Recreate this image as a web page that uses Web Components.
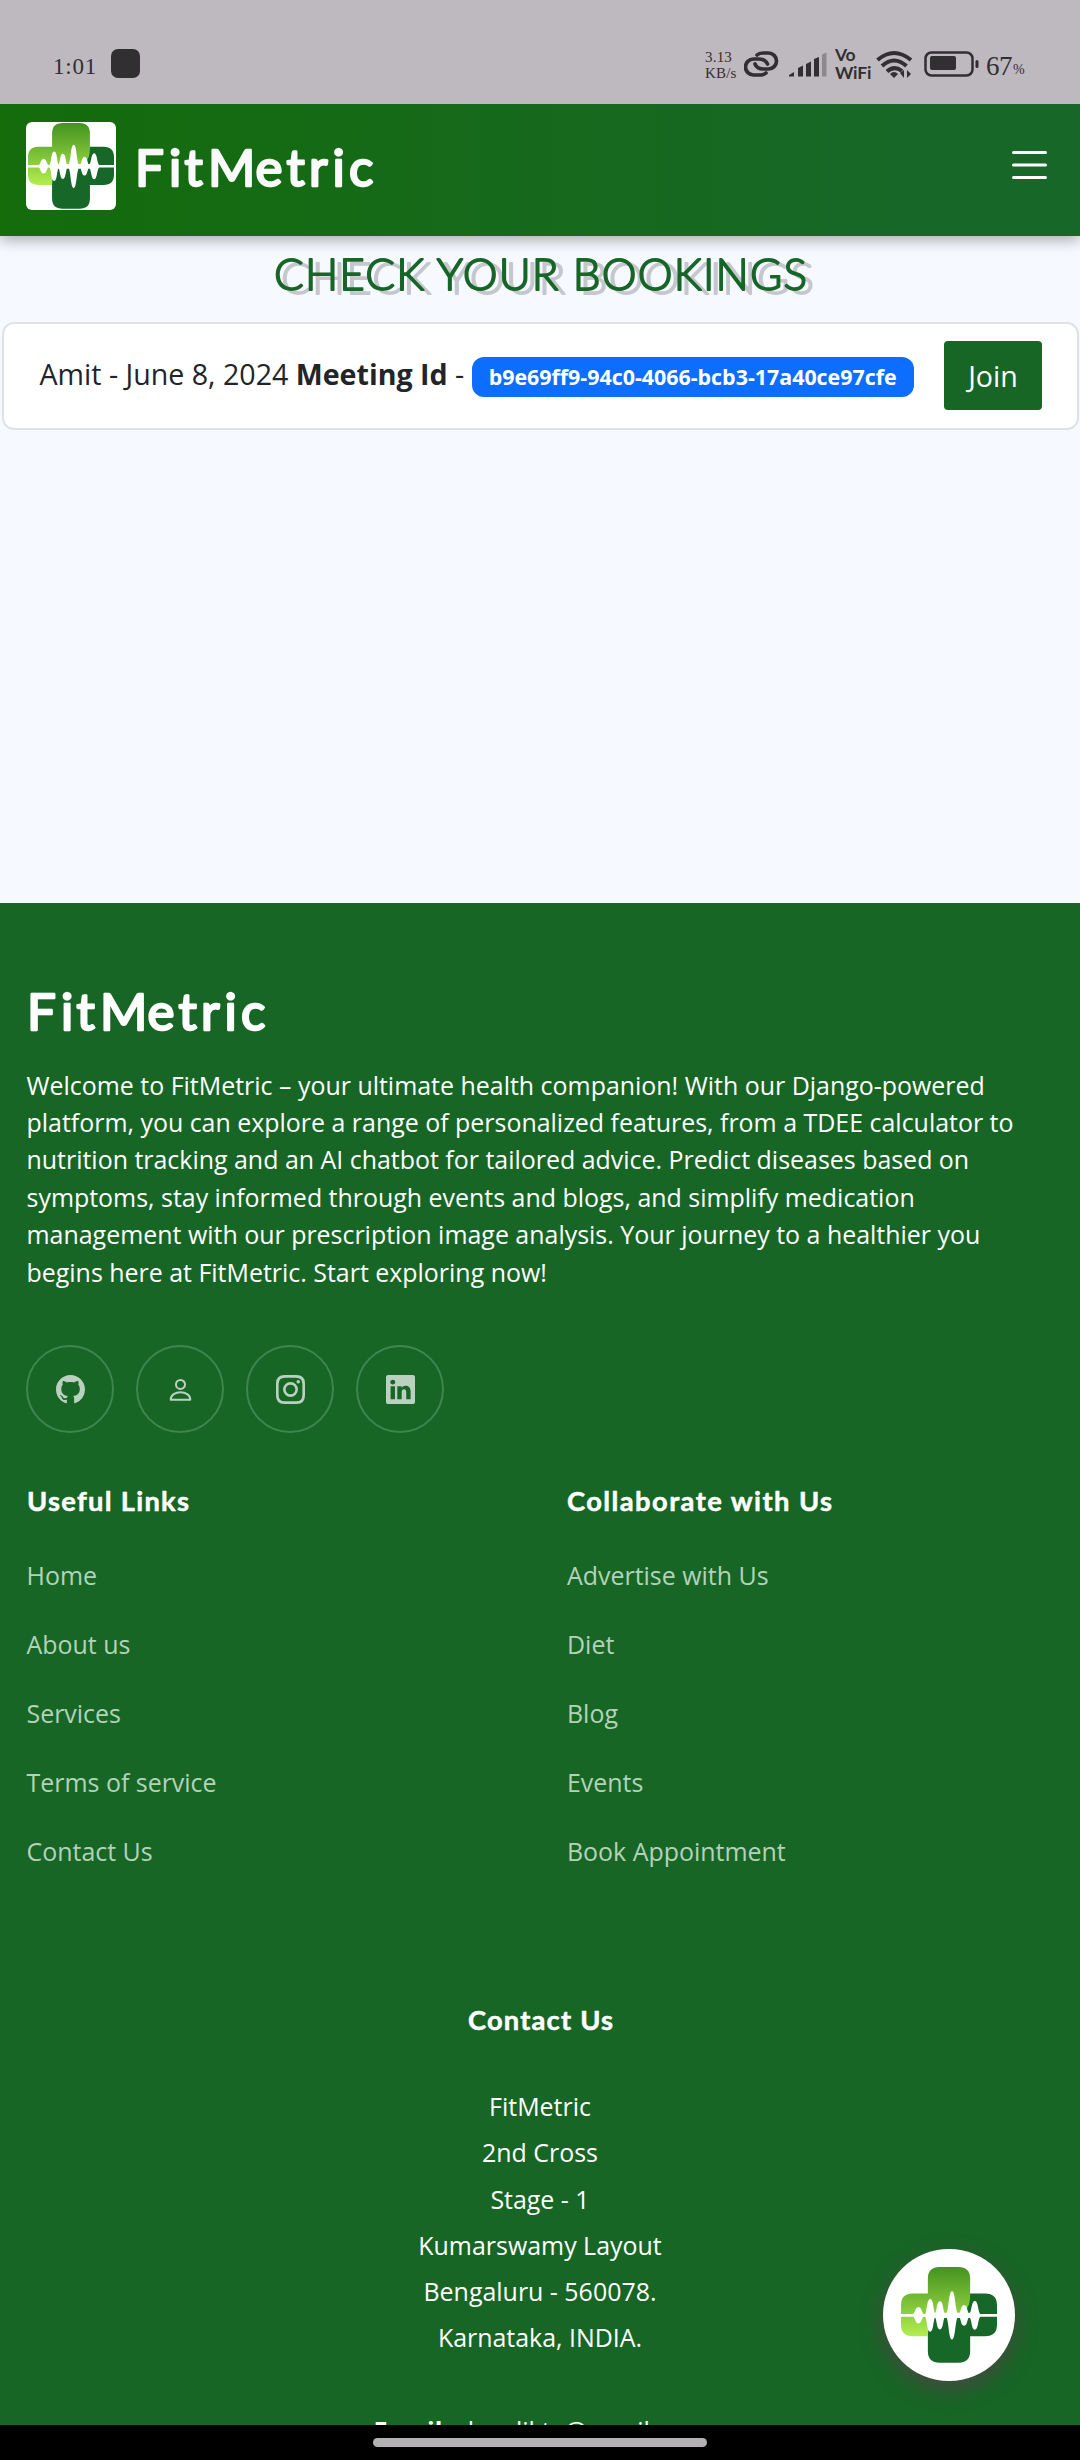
<!DOCTYPE html>
<html lang="en">
<head>
<meta charset="utf-8">
<title>FitMetric</title>
<style>
html,body{margin:0;height:2460px;overflow:hidden}
body{font-family:"Open Sans",sans-serif;background:#f6f9ff}
</style>
</head>
<body>
<fit-app></fit-app>
<script>
const define=(name,html)=>customElements.define(name,class extends HTMLElement{
  connectedCallback(){
    if(this.shadowRoot)return;
    const t=document.createElement('template');
    t.innerHTML=typeof html==='function'?html(this):html;
    this.attachShadow({mode:'open'}).append(t.content.cloneNode(true));
  }
});

// Rounded lettering: light strokes thickened with round joins.
define('round-text',el=>{
  const a=n=>el.getAttribute(n);
  const len=a('len')?`textLength="${a('len')}" lengthAdjust="spacing"`:'';
  return `<style>:host{display:block;width:${a('w')}px;height:${a('h')}px}svg{display:block;overflow:visible}
  text{font:${a('weight')||400} ${a('size')}px Lato,sans-serif;fill:currentColor;stroke:currentColor;stroke-width:${a('stroke')}px;stroke-linejoin:round}</style>
  <svg width="${a('w')}" height="${a('h')}"><text x="${a('x')||0}" y="${a('base')}" ${len}>${a('text')}</text></svg>`;
});

const spike=(x,h,w)=>`M${x-w},144C${x-8},141 ${x-12},${144-h} ${x},${144-h}S${x+8},141 ${x+w},144C${x+8},147 ${x+12},${144+h} ${x},${144+h}S${x-8},147 ${x-w},144Z`;
define('cross-logo',`<style>:host{display:block}svg{display:block;width:100%;height:100%}</style>
<svg viewBox="0 0 286 286"><defs><linearGradient id="g" x1="0" y1="0" x2="0" y2="206" gradientUnits="userSpaceOnUse"><stop stop-color="#449220"/><stop offset="1" stop-color="#b2ee4e"/></linearGradient></defs>
<path fill="#176728" d="M80 144H180L206 79H251Q286 79 286 114V171Q286 206 251 206H206V250Q206 285 171 285H115Q80 285 80 250Z"/>
<path fill="url(#g)" d="M80 35Q80 0 115 0H171Q206 0 206 35V86Q206 118 190 130L170 146H100Q80 160 80 206H35Q0 206 0 171V114Q0 79 35 79H80Z"/>
<path stroke="#fff" stroke-width="8" d="M-2 144H288"/>
<path fill="#fff" d="${spike(52,24,22)}${spike(87,49,19)}${spike(116,42,19)}${spike(152,72,22)}${spike(188,31,20)}${spike(220,43,21)}M75 136H230V152H75Z"/></svg>`);

define('status-bar',`<style>
:host{display:flex;height:104px;background:#beb9bf;color:#322f32;font-family:"Liberation Serif",serif;box-sizing:border-box;padding:0 57px 0 53px;justify-content:space-between;z-index:3}
.l{display:flex;gap:14px;padding-top:49px}.l span{font-size:23px;line-height:35px;width:44px;letter-spacing:.8px}
.l i{width:29px;height:29px;border-radius:7px;background:#322f32}
.r{display:grid;grid-template-columns:39px 45px 46px 41px 48px 62px 27px 10px;padding-top:46px;height:40px}
.n{font-size:15px;line-height:16px;padding-top:3px;letter-spacing:.2px}
.v{font:700 17.500px/17px Lato,sans-serif;letter-spacing:-.2px}
.v span+span{margin-top:1px}
.b{font-size:27px;line-height:40px;letter-spacing:-.5px}.p{font-size:14px;line-height:47px;letter-spacing:-1px}
svg{display:block}.v span,.n span{display:block}
</style>
<div class="l"><span>1:01</span><i></i></div>
<div class="r"><div class="n"><span>3.13</span><span>KB/s</span></div>
<svg width="36" height="34" fill="none" stroke="#322f32" stroke-width="3.700" stroke-linecap="round"><path d="M13 9Q15 7 19 7H24.500a8 8 0 0 1 0 16H19Q13 23 11 18"/><path d="M22 27Q20 29 16 29H9.500a8 8 0 0 1 0-16H15Q21 13 23.500 18"/></svg>
<svg width="40" height="34" fill="#322f32"><path d="M0 30.500V29l5-3v4q0 .5-.5.5zM9 30.500V22l5-2.500v11zM17 30.500V18l5-2.500v15zM25 30.500V13l5-2v19.500z"/><path fill="#8c888d" d="M33 30.500V8.500l4.500-2v24z"/></svg>
<div class="v"><span>Vo</span><span>WiFi</span></div>
<svg width="38" height="34"><g fill="none" stroke="#322f32" stroke-width="4"><path d="M1.500 14Q18 0 35 14"/><path d="M6 20Q18 9 30.500 20"/><path d="M11 25.500Q18 19 26 25"/></g><path fill="#322f32" d="M14 28q4-4 8 0l-4 4z"/><path fill="#322f32" d="M28 24v8l-4-5zM31 32v-8l4 4z"/></svg>
<svg width="58" height="34"><rect x="1.500" y="6.500" width="47" height="23" rx="6" fill="none" stroke="#322f32" stroke-width="2.500"/><rect x="6" y="10" width="26" height="14" rx="2" fill="#322f32"/><rect x="51.500" y="14" width="3" height="8" rx="1.500" fill="#322f32"/></svg>
<div class="b">67</div><div class="p">%</div></div>`);

define('site-header',`<style>
:host{display:flex;align-items:flex-start;height:132px;box-sizing:border-box;padding:18px 33px 0 26px;background:linear-gradient(90deg,#146c0b,#176728 85%);box-shadow:0 4px 14px rgba(0,0,0,.32);z-index:2;color:#fafafa}
.logo{width:90px;height:88px;border-radius:6px;background:#fff;display:grid;place-items:center}
cross-logo{width:86px;height:86px}
round-text{margin-left:21.500px;flex:1}
svg{margin-top:28px}
</style><div class="logo"><cross-logo></cross-logo></div>
<round-text text="FitMetric" x="-3 31 46.500 70 117.500 148.500 171 194.500 211" base="64" size="51" stroke="2.400" w="260" h="88"></round-text>
<svg width="35" height="30" stroke="#fff" stroke-width="3" stroke-linecap="round"><path d="M1.500 2.500h32M1.500 15h32M1.500 27.500h32"/></svg>`);

define('booking-card',`<style>
:host{display:flex;align-items:flex-start;margin:0 1px 0 2px;height:108px;box-sizing:border-box;border:2px solid #dee2e6;border-radius:12px;background:#fff;color:#212529;font-size:28.600px}
.t{margin:27px 0 0 35.500px;line-height:46px;flex:1;white-space:nowrap;display:flex}
.t span,.t b{white-space:pre}
mark{display:block;margin-top:6px;width:442px;height:40px;box-sizing:border-box;border-radius:12px;background:#0d6efd;color:#fff;font-weight:700;font-size:21.400px;line-height:39.500px;text-align:center}
button{all:unset;width:98px;height:69px;margin:17px 35px 0 0;border-radius:4px;background:#186626;color:#fff;text-align:center;line-height:65px}
button span{display:block;height:65px;margin-top:-1px}
</style><div class="t"><span><slot name="who"></slot> </span><b>Meeting Id</b><span> - </span><mark><slot name="id"></slot></mark></div><button><span>Join</span></button>`);

define('bookings-page',`<style>
:host{display:flex;flex-direction:column;height:667px;background:#f6f9ff}
round-text{color:#176628;margin:0 0 16px 274px;filter:drop-shadow(7px 4px 0 #c5c7cc)}
</style><round-text text="CHECK YOUR BOOKINGS" base="53.500" size="44" weight="300" stroke="1.800" len="533" w="540" h="70"></round-text>
<booking-card><span slot="who">Amit - June 8, 2024</span><span slot="id">b9e69ff9-94c0-4066-bcb3-17a40ce97cfe</span></booking-card>`);

define('social-link',`<style>:host{display:grid;place-items:center;box-sizing:border-box;width:88px;height:88px;border:2px solid #3f8550;border-radius:50%}</style><slot></slot>`);

define('link-list',el=>`<style>
:host{display:block;flex:1}
round-text{color:#fff;margin-bottom:37.300px}
a{display:block;font-size:24.950px;line-height:38px;margin-bottom:31px;color:#b3d3b9;white-space:nowrap}
</style><round-text text="${el.getAttribute('head')}" base="32" size="27.300" weight="700" stroke=".5" len="${el.getAttribute('len')}" w="400" h="40"></round-text>
${el.getAttribute('items').split('|').map(i=>`<a>${i}</a>`).join('')}`);

const icon=p=>`<social-link><svg style="display:block" width="29" height="29" viewBox="0 0 16 16" fill="#b9d1be">${p}</svg></social-link>`;
define('site-footer',`<style>
:host{display:flex;flex-direction:column;height:1522px;box-sizing:border-box;overflow:hidden;background:#186626;color:#fff;padding-top:78px}
:host>*{flex:none}
.brand{margin-left:29.500px}
p{margin:4.600px 0 0 26.500px;font-size:24.950px;line-height:37.400px;white-space:nowrap}
.soc{display:flex;gap:22px;margin:54px 0 0 26px}
.cols{display:flex;margin:46px 0 0 26.500px;height:520px}
link-list:first-child{flex:0 0 540.500px}
.contact{align-self:center;display:flex;flex-direction:column;align-items:center}
.contact round-text{margin:0 0 47px 1px}
.contact div{font-size:24.950px;line-height:46.250px;white-space:nowrap}
</style>
<round-text class="brand" text="FitMetric" x="-3 31 46.500 70 117.500 148.500 171 194.500 211" base="49" size="51" stroke="2.400" w="260" h="81"></round-text>
<p>Welcome to FitMetric – your ultimate health companion! With our Django-powered<br>platform, you can explore a range of personalized features, from a TDEE calculator to<br>nutrition tracking and an AI chatbot for tailored advice. Predict diseases based on<br>symptoms, stay informed through events and blogs, and simplify medication<br>management with our prescription image analysis. Your journey to a healthier you<br>begins here at FitMetric. Start exploring now!</p>
<div class="soc">
${icon('<path d="M8 0C3.580 0 0 3.580 0 8c0 3.540 2.290 6.530 5.470 7.590.4.070.55-.17.55-.38 0-.19-.01-.82-.01-1.490-2.010.37-2.530-.49-2.690-.94-.09-.23-.48-.94-.82-1.130-.28-.15-.68-.52-.01-.53.63-.01 1.080.58 1.230.82.72 1.210 1.870.87 2.330.66.070-.52.28-.87.51-1.070-1.780-.2-3.640-.89-3.640-3.950 0-.87.31-1.590.82-2.150-.08-.2-.36-1.020.08-2.120 0 0 .67-.21 2.200.82.64-.18 1.320-.27 2-.27s1.360.09 2 .27c1.530-1.040 2.200-.82 2.200-.82.44 1.100.16 1.920.08 2.120.51.56.82 1.270.82 2.150 0 3.070-1.870 3.750-3.650 3.950.29.25.54.73.54 1.480 0 1.070-.01 1.930-.01 2.200 0 .21.15.46.55.38A8.010 8.010 0 0 0 16 8c0-4.420-3.580-8-8-8"/>')}
${icon('<path fill="none" stroke="#b9d1be" stroke-width="1.100" stroke-linejoin="round" d="M8 2.700a2.500 2.500 0 1 1 0 5a2.500 2.500 0 1 1 0-5zM2.600 13.600C2.600 8.200 13.400 8.200 13.400 13.600z"/>')}
${icon('<path fill-rule="evenodd" d="M4.700 0H11.300Q16 0 16 4.700V11.300Q16 16 11.300 16H4.700Q0 16 0 11.300V4.700Q0 0 4.700 0zM5 1.450Q1.450 1.450 1.450 5V11Q1.450 14.550 5 14.550H11Q14.550 14.550 14.550 11V5Q14.550 1.450 11 1.450zM8 3.890a4.110 4.110 0 1 1 0 8.220a4.110 4.110 0 1 1 0-8.220zm0 1.440a2.670 2.670 0 1 0 0 5.340a2.670 2.670 0 1 0 0-5.340z"/><circle cx="12.270" cy="3.730" r=".96"/>')}
${icon('<path d="M0 1.146C0 .513.526 0 1.175 0h13.650C15.474 0 16 .513 16 1.146v13.708c0 .633-.526 1.146-1.175 1.146H1.175C.526 16 0 15.487 0 14.854zm4.943 12.248V6.169H2.542v7.225zm-1.200-8.212c.837 0 1.358-.554 1.358-1.248-.015-.709-.52-1.248-1.342-1.248S2.400 3.226 2.400 3.934c0 .694.521 1.248 1.327 1.248zm4.908 8.212V9.359c0-.216.016-.432.08-.586.173-.431.568-.878 1.232-.878.869 0 1.216.662 1.216 1.634v3.865h2.401V9.250c0-2.220-1.184-3.252-2.764-3.252-1.274 0-1.845.7-2.165 1.193v.025h-.016l.016-.025V6.169h-2.400c.03.678 0 7.225 0 7.225z"/>')}
</div>
<div class="cols"><link-list head="Useful Links" len="162" items="Home|About us|Services|Terms of service|Contact Us"></link-list><link-list head="Collaborate with Us" len="265" items="Advertise with Us|Diet|Blog|Events|Book Appointment"></link-list></div>
<div class="contact"><round-text text="Contact Us" base="31" size="27.300" weight="700" stroke=".5" len="145" w="145" h="37"></round-text>
<div>FitMetric</div><div>2nd Cross</div><div>Stage - 1</div><div>Kumarswamy Layout</div><div>Bengaluru - 560078.</div><div>Karnataka, INDIA.</div><div>&nbsp;</div><div><b>Email:</b> shardikta@gmail.com</div></div>`);

define('chat-button',`<style>:host{display:grid;place-items:center;position:absolute;left:883px;top:2249px;width:132px;height:132px;border-radius:50%;background:#fff;box-shadow:0 8px 20px rgba(74,70,68,.9)}cross-logo{width:96px;height:96px}</style><cross-logo></cross-logo>`);
define('nav-bar',`<style>:host{display:flex;justify-content:center;height:35px;background:#000;z-index:3}i{width:334px;height:9px;border-radius:5px;background:#b3b1b3;margin-top:13px}</style><i></i>`);
define('fit-app',`<style>:host{display:flex;flex-direction:column;width:1080px;height:2460px;position:relative;overflow:hidden}:host>*{flex:none}</style>
<status-bar></status-bar><site-header></site-header><bookings-page></bookings-page><site-footer></site-footer><nav-bar></nav-bar><chat-button></chat-button>`);
</script>
</body>
</html>
